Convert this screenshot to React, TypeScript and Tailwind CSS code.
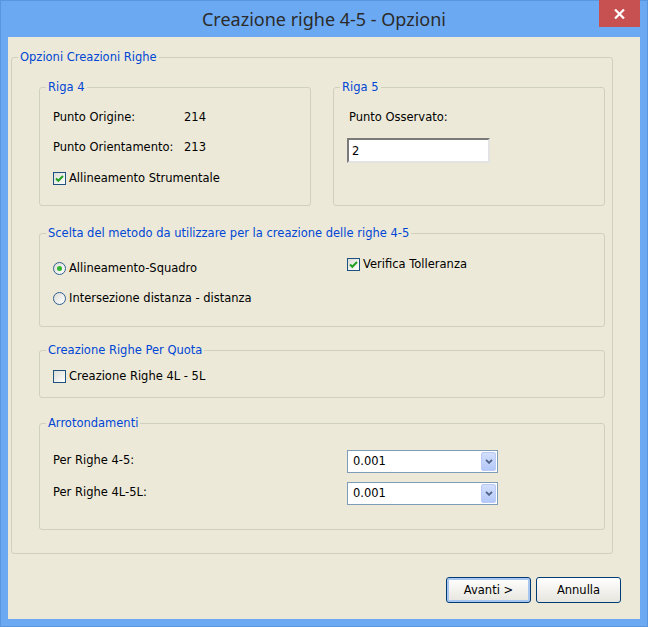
import type { ReactNode } from 'react';

const ui = "font-['DejaVu_Sans',sans-serif] text-[11.5px] leading-[14px] text-black";

function GroupBox({ title, className = '', children }: { title: string; className?: string; children: ReactNode }) {
  return (
    <fieldset className={`border border-[#d0d0bf] rounded-[3px] ${className}`}>
      <legend className="ml-[6px] px-[2px] text-[#0046d5]">{title}</legend>
      {children}
    </fieldset>
  );
}

function CheckBox({ checked, label }: { checked?: boolean; label: string }) {
  return (
    <div className="flex items-center gap-[3px] h-[22px]">
      <span className="w-[13px] h-[13px] border border-[#1c5180] bg-gradient-to-br from-[#dcdcd7] to-white flex items-center justify-center">
        {checked && (
          <svg width="11" height="11" viewBox="0 0 11 11">
            <path d="M2 5.5 L4.3 7.8 L9 3" fill="none" stroke="#21a121" strokeWidth={2} />
          </svg>
        )}
      </span>
      <span>{label}</span>
    </div>
  );
}

function Radio({ checked, label }: { checked?: boolean; label: string }) {
  return (
    <div className="flex items-center gap-[3px] h-[30px]">
      <span className="w-[13px] h-[13px] rounded-full border border-[#2f5f8f] bg-gradient-to-br from-[#dcdcd7] to-white flex items-center justify-center">
        {checked && <span className="w-[5px] h-[5px] rounded-full bg-[#2fb52f]" />}
      </span>
      <span>{label}</span>
    </div>
  );
}

function Combo({ value }: { value: string }) {
  return (
    <div className="w-[151px] h-[23px] border border-[#7f9db9] bg-white flex items-center">
      <span className="pl-[5px]">{value}</span>
      <span className="ml-auto mr-[1px] w-[15px] h-[19px] rounded-[2px] border border-[#b9cbf8] bg-gradient-to-b from-[#d2defd] to-[#b4c8f8] flex items-center justify-center">
        <svg width="8" height="5" viewBox="0 0 8 5">
          <path d="M1 0.8 L4 3.8 L7 0.8" fill="none" stroke="#4d6185" strokeWidth={1.8} />
        </svg>
      </span>
    </div>
  );
}

function Button({ label, isDefault }: { label: string; isDefault?: boolean }) {
  return (
    <button
      type="button"
      className={`w-[85px] h-[26px] rounded-[3px] border border-[#003c74] bg-gradient-to-b from-white to-[#e6e5de] ${
        isDefault ? 'shadow-[inset_0_0_0_2px_#a9c6f0]' : ''
      }`}
    >
      {label}
    </button>
  );
}

export default function App() {
  return (
    <div className="w-[648px] h-[627px] bg-[#6baaf2] shadow-[inset_0_0_0_1px_#5a96dd] flex flex-col">
      {/* Title bar */}
      <div className="relative h-[37px] flex items-center justify-center">
        <span className="font-['Noto_Sans',sans-serif] text-[18px] text-[#2b2b2b] pt-[1px]">
          Creazione righe 4-5 - Opzioni
        </span>
        <button
          type="button"
          className="absolute top-0 right-[8px] w-[41px] h-[27px] bg-[#c75050] flex items-center justify-center"
        >
          <svg width="11" height="10" viewBox="0 0 11 10">
            <path d="M1 0.5 L10 9.5 M10 0.5 L1 9.5" stroke="white" strokeWidth={2.2} />
          </svg>
        </button>
      </div>

      {/* Client area */}
      <div className={`mx-[8px] mb-[8px] flex-1 bg-[#ece9d8] flex flex-col ${ui}`}>
        <GroupBox title="Opzioni Creazioni Righe" className="ml-[3px] mt-[13px] w-[602px]">
          <div className="pl-[27px] pr-[7px] pt-[16px] pb-[23px]">
            <div className="flex gap-[22px]">
              <GroupBox title="Riga 4" className="w-[272px]">
                <div className="pl-[13px] pt-[8px] pb-[13px]">
                  <div className="flex items-center h-[30px]">
                    <span className="w-[131px]">Punto Origine:</span>
                    <span>214</span>
                  </div>
                  <div className="flex items-center h-[30px]">
                    <span className="w-[131px]">Punto Orientamento:</span>
                    <span>213</span>
                  </div>
                  <div className="flex items-center h-[30px] pt-[2px]">
                    <CheckBox checked label="Allineamento Strumentale" />
                  </div>
                </div>
              </GroupBox>
              <GroupBox title="Riga 5" className="flex-1">
                <div className="pl-[13px] pt-[8px]">
                  <div className="flex items-center h-[30px] ml-[2px]">Punto Osservato:</div>
                  <input
                    readOnly
                    value="2"
                    className="mt-[6px] w-[143px] h-[25px] bg-white pl-[3px] border-2 border-t-[#7a7a7a] border-l-[#7a7a7a] border-b-[#e3e3e3] border-r-[#e3e3e3] outline-none"
                  />
                </div>
              </GroupBox>
            </div>

            <GroupBox title="Scelta del metodo da utilizzare per la creazione delle righe 4-5" className="mt-[20px]">
              <div className="pl-[13px] pt-[13px] pb-[13px] flex">
                <div className="w-[294px] flex flex-col">
                  <Radio checked label="Allineamento-Squadro" />
                  <Radio label="Intersezione distanza - distanza" />
                </div>
                <div>
                  <CheckBox checked label="Verifica Tolleranza" />
                </div>
              </div>
            </GroupBox>

            <GroupBox title="Creazione Righe Per Quota" className="mt-[16px]">
              <div className="pl-[13px] pt-[8px] pb-[10px]">
                <CheckBox label="Creazione Righe 4L - 5L" />
              </div>
            </GroupBox>

            <GroupBox title="Arrotondamenti" className="mt-[18px]">
              <div className="pl-[13px] pt-[19px] pb-[24px] flex flex-col gap-[8px]">
                <div className="flex items-center h-[24px]">
                  <span className="w-[294px] pb-[3px]">Per Righe 4-5:</span>
                  <Combo value="0.001" />
                </div>
                <div className="flex items-center h-[24px]">
                  <span className="w-[294px] pb-[3px]">Per Righe 4L-5L:</span>
                  <Combo value="0.001" />
                </div>
              </div>
            </GroupBox>
          </div>
        </GroupBox>

        <div className="flex-1 flex items-end justify-end gap-[5px] pr-[19px] pb-[16px]">
          <Button label="Avanti >" isDefault />
          <Button label="Annulla" />
        </div>
      </div>
    </div>
  );
}
